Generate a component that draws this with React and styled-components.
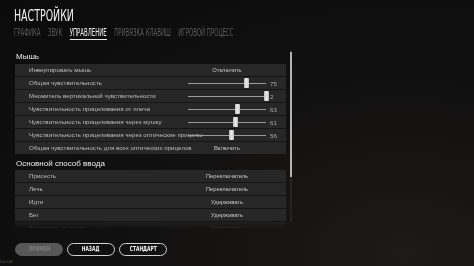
import React from 'react';
import styled, { createGlobalStyle } from 'styled-components';

const GlobalStyle = createGlobalStyle`
  html, body {
    margin: 0;
    padding: 0;
    width: 474px;
    height: 266px;
    overflow: hidden;
    background: #0e0d0d;
  }
  * { box-sizing: border-box; }
`;

const Page = styled.div`
  width: 474px;
  height: 266px;
  padding: 9px 0 0 14px;
  display: flex;
  flex-direction: column;
  background: radial-gradient(ellipse at 85% 95%, #1d1a17 0%, #121111 45%, #0c0b0b 100%);
  font-family: "Liberation Sans", Arial, sans-serif;
  color: #bdbdbd;
`;

const Title = styled.div`
  font-family: "Liberation Sans Narrow", "DejaVu Sans Condensed", sans-serif;
  font-size: 15px;
  line-height: 15px;
  height: 15px;
  color: #f2f2f2;
  transform: scaleX(0.7);
  transform-origin: left center;
  white-space: nowrap;
`;

const Tabs = styled.div`
  margin-top: 3.5px;
  display: flex;
  gap: 12.5px;
  transform: scaleX(0.6);
  transform-origin: left center;
  white-space: nowrap;
`;

const Tab = styled.div`
  font-family: "Liberation Sans Narrow", "DejaVu Sans Condensed", sans-serif;
  font-size: 10px;
  line-height: 10px;
  padding-bottom: 1px;
  border-bottom: 1px solid ${p => (p.$active ? '#e6e6e6' : 'transparent')};
  color: ${p => (p.$active ? '#f0f0f0' : '#5a5a5a')};
`;

const Content = styled.div`
  margin-top: 10.5px;
  display: flex;
  gap: 4px;
  height: 178px;
`;

const List = styled.div`
  width: 271px;
  margin-left: 1px;
  height: 178px;
  overflow: hidden;
  display: flex;
  flex-direction: column;
  -webkit-mask-image: linear-gradient(to bottom, #000 96%, rgba(0,0,0,0.55) 97%, rgba(0,0,0,0.15) 100%);
`;

const SectionHeader = styled.div`
  font-size: 8px;
  color: #ececec;
  padding: ${p => (p.$first ? '0' : '4px')} 0 0 1px;
  height: ${p => (p.$first ? '14px' : '16px')};
  line-height: ${p => (p.$first ? '14px' : '12px')};
  white-space: nowrap;
`;

const Rows = styled.div`
  display: flex;
  flex-direction: column;
  gap: 1px;
  background: #151515;
  flex-shrink: 0;
`;

const Row = styled.div`
  height: 12px;
  flex-shrink: 0;
  display: grid;
  grid-template-columns: minmax(0, 1fr) 78px 16px;
  column-gap: 4px;
  align-items: center;
  padding-left: 14px;
  background: #272727;
  font-size: 6.2px;
  color: #bcbcbc;
`;

const Label = styled.div`
  white-space: nowrap;
  overflow: visible;
  line-height: 12px;
`;

const Choice = styled.div`
  text-align: center;
  white-space: nowrap;
  font-size: 5.8px;
  color: #c8c8c8;
`;

const Track = styled.div`
  position: relative;
  height: 1px;
  background: #9a9a9a;
`;

const Thumb = styled.div`
  position: absolute;
  top: -5px;
  width: 5px;
  height: 10px;
  margin-left: -2.5px;
  border-radius: 1px;
  background: linear-gradient(to right, #bdbdbd, #eaeaea 50%, #bdbdbd);
`;

const Value = styled.div`
  font-size: 6.2px;
  color: #a8a8a8;
  white-space: nowrap;
`;

const ScrollTrack = styled.div`
  width: 2px;
  height: 172px;
  background: #242424;
  display: flex;
  flex-direction: column;
`;

const ScrollThumb = styled.div`
  margin-top: 2px;
  height: 125px;
  background: #b4b4b4;
`;

const Footer = styled.div`
  margin-top: 15px;
  margin-left: 1px;
  display: flex;
  gap: 4px;
`;

const Button = styled.div`
  width: 48px;
  height: 13px;
  border-radius: 7px;
  display: flex;
  align-items: center;
  justify-content: center;
  border: 1.2px solid ${p => (p.$disabled ? '#575757' : '#d2d2d2')};
  background: ${p => (p.$disabled ? '#575757' : 'transparent')};
  color: ${p => (p.$disabled ? '#7e7e7e' : '#f2f2f2')};
`;

const ButtonText = styled.span`
  display: inline-block;
  font-family: "Liberation Sans Narrow", "DejaVu Sans Condensed", sans-serif;
  font-weight: bold;
  font-size: 7px;
  line-height: 7px;
  transform: scaleX(0.7);
  white-space: nowrap;
`;

const Version = styled.div`
  margin: 3px 0 0 -14px;
  font-size: 4px;
  color: #6a6a6a;
`;

const tabs = ['ГРАФИКА', 'ЗВУК', 'УПРАВЛЕНИЕ', 'ПРИВЯЗКА КЛАВИШ', 'ИГРОВОЙ ПРОЦЕСС'];

const mouseRows = [
  { label: 'Инвертировать мышь', choice: 'Отключить' },
  { label: 'Общая чувствительность', value: 75, max: 100 },
  { label: 'Множитель вертикальной чувствительности', value: 2, max: 2 },
  { label: 'Чувствительность прицеливания от плеча', value: 63, max: 100 },
  { label: 'Чувствительность прицеливания через мушку', value: 61, max: 100 },
  { label: 'Чувствительность прицеливания через оптические прицелы', value: 56, max: 100 },
  { label: 'Общая чувствительность для всех оптических прицелов', choice: 'Включить' },
];

const inputRows = [
  { label: 'Присесть', choice: 'Переключатель' },
  { label: 'Лечь', choice: 'Переключатель' },
  { label: 'Идти', choice: 'Удерживать' },
  { label: 'Бег', choice: 'Удерживать' },
  { label: 'Задержать дыхание', choice: 'Удерживать' },
];

const SettingRow = ({ row }) => (
  <Row>
    <Label>{row.label}</Label>
    {row.choice ? (
      <Choice>{row.choice}</Choice>
    ) : (
      <Track>
        <Thumb style={{ left: `${(row.value / row.max) * 100}%` }} />
      </Track>
    )}
    <Value>{row.choice ? '' : row.value}</Value>
  </Row>
);

const App = () => {
  return (
    <>
      <GlobalStyle />
      <Page>
        <Title>НАСТРОЙКИ</Title>
        <Tabs>
          {tabs.map(t => (
            <Tab key={t} $active={t === 'УПРАВЛЕНИЕ'}>{t}</Tab>
          ))}
        </Tabs>
        <Content>
          <List>
            <SectionHeader $first>Мышь</SectionHeader>
            <Rows>
              {mouseRows.map(r => <SettingRow key={r.label} row={r} />)}
            </Rows>
            <SectionHeader>Основной способ ввода</SectionHeader>
            <Rows>
              {inputRows.map(r => <SettingRow key={r.label} row={r} />)}
            </Rows>
          </List>
          <ScrollTrack>
            <ScrollThumb />
          </ScrollTrack>
        </Content>
        <Footer>
          <Button $disabled><ButtonText>ПРИМЕН</ButtonText></Button>
          <Button><ButtonText>НАЗАД</ButtonText></Button>
          <Button><ButtonText>СТАНДАРТ</ButtonText></Button>
        </Footer>
        <Version>1.0.1.8</Version>
      </Page>
    </>
  );
};

export default App;
